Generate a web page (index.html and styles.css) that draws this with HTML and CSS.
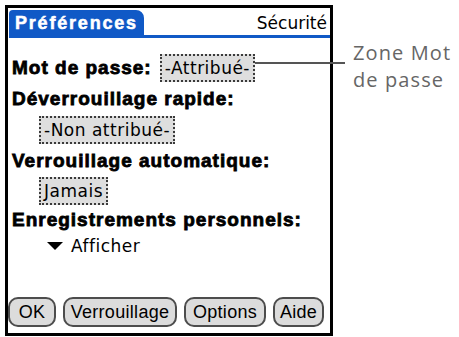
FILE: index.html
```html
<!DOCTYPE html>
<html lang="fr">
<head>
<meta charset="utf-8">
<link rel="stylesheet" href="styles.css">
</head>
<body>
<div class="stage">
  <div class="device">
    <div class="titlebar">
      <div class="tab">Préférences</div>
      <div class="form-name">Sécurité</div>
    </div>
    <div class="content">
      <div class="row row-first">
        <span class="label">Mot de passe:</span>
        <span class="pick pick-callout">-Attribué-</span>
      </div>
      <div class="row row-label r2"><span class="label">Déverrouillage rapide:</span></div>
      <div class="row row-pick"><span class="pick">-Non attribué-</span></div>
      <div class="row row-label r4"><span class="label">Verrouillage automatique:</span></div>
      <div class="row row-pick"><span class="pick">Jamais</span></div>
      <div class="row row-label r6"><span class="label">Enregistrements personnels:</span></div>
      <div class="row row-trigger">
        <svg class="tri" width="16" height="8" viewBox="0 0 16 8"><polygon points="0,0 16,0 8,8" fill="#000"/></svg>
        <span class="trigger-text">Afficher</span>
      </div>
    </div>
    <div class="buttons">
      <span class="btn b-ok">OK</span>
      <span class="btn b-lock">Verrouillage</span>
      <span class="btn b-opt">Options</span>
      <span class="btn b-help">Aide</span>
    </div>
  </div>
  <div class="callout">Zone Mot<br>de passe</div>
</div>
</body>
</html>
```
FILE: styles.css
```css
* { box-sizing: border-box; }
html, body { margin: 0; padding: 0; background: #fff; }
body { width: 459px; height: 337px; overflow: hidden; }

.stage {
  display: flex;
  align-items: flex-start;
  padding: 5px 0 0 5px;
}

.device {
  width: 328px;
  height: 331px;
  border: 3px solid #000;
  display: flex;
  flex-direction: column;
  padding: 2px 0 0 1px;
  flex: none;
}

.titlebar {
  display: flex;
  align-items: flex-end;
  height: 28px;
  border-bottom: 3px solid #1059c6;
}

.tab {
  height: 25px;
  padding: 1px 6px 0 6px;
  line-height: 24px;
  font-family: "Liberation Sans", Arial, sans-serif;
  font-weight: bold;
  font-size: 18px;
  letter-spacing: 1.8px;
  color: #fff;
  background: #1059c6;
  border-radius: 4px 8px 0 0;
  -webkit-text-stroke: 0.5px #fff;
}

.form-name {
  margin-left: auto;
  margin-right: 3px;
  line-height: 24px;
  font-family: "DejaVu Sans", sans-serif;
  font-size: 17px;
  color: #000;
}

.content {
  padding: 15px 0 0 3px;
  display: flex;
  flex-direction: column;
}

.row {
  display: flex;
  align-items: center;
}

.row-first { height: 29px; gap: 8px; }
.r2 { height: 33px; }
.r4 { height: 32px; }
.r6 { height: 29px; }
.row-pick { height: 29px; padding-left: 27px; }
.row-trigger { height: 24px; padding-left: 35px; gap: 8px; }

.label {
  font-family: "Liberation Sans", Arial, sans-serif;
  font-weight: bold;
  font-size: 19px;
  line-height: 1;
  letter-spacing: 1px;
  color: #000;
  white-space: nowrap;
  -webkit-text-stroke: 0.8px #000;
}

.pick {
  height: 28px;
  border: 2px dotted #3a3a3a;
  background: #dedede;
  padding: 0 3px;
  font-family: "DejaVu Sans", sans-serif;
  font-size: 17px;
  line-height: 24px;
  letter-spacing: 0.5px;
  color: #000;
  white-space: nowrap;
}

.pick-callout { position: relative; }
.pick-callout::after {
  content: "";
  position: absolute;
  left: calc(100% + 2px);
  top: 6px;
  width: 90px;
  height: 2px;
  background: #555;
}

.tri { flex: none; }

.trigger-text {
  font-family: "DejaVu Sans", sans-serif;
  font-size: 17px;
  letter-spacing: 0.5px;
  color: #000;
}

.buttons {
  margin-top: auto;
  margin-left: -1px;
  padding-bottom: 6px;
  display: flex;
  gap: 7px;
}

.btn {
  height: 30px;
  border: 2px solid #4d4d4d;
  border-radius: 10px;
  background: #dcdcdc;
  font-family: "Liberation Sans", Arial, sans-serif;
  font-size: 18px;
  line-height: 26px;
  letter-spacing: 0.3px;
  text-align: center;
  color: #000;
}

.b-ok { width: 48px; }
.b-lock { width: 114px; }
.b-opt { width: 82px; }
.b-help { width: 51px; }

.callout {
  margin: 34px 0 0 20px;
  font-family: "Open Sans", sans-serif;
  font-size: 20px;
  line-height: 27px;
  letter-spacing: 1.1px;
  color: #666;
  white-space: nowrap;
}
```
